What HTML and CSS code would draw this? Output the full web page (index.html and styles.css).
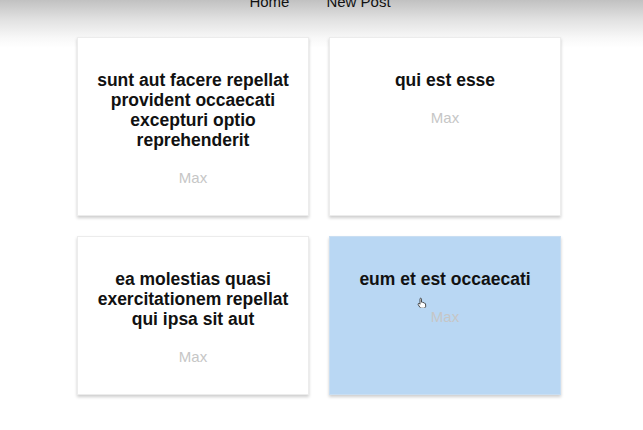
FILE: index.html
```html
<html>
<head>
  <link rel="stylesheet" href="styles.css">
</head>
<body>
  <div class="nav">
    <a class="nav-link" href="#">Home</a>
    <a class="nav-link" href="#">New Post</a>
  </div>
  <div class="posts">
    <div class="post">
      <h2 class="post-title">sunt aut facere repellat provident occaecati excepturi optio reprehenderit</h2>
      <p class="post-author">Max</p>
    </div>
    <div class="post">
      <h2 class="post-title">qui est esse</h2>
      <p class="post-author">Max</p>
    </div>
    <div class="post">
      <h2 class="post-title">ea molestias quasi exercitationem repellat qui ipsa sit aut</h2>
      <p class="post-author">Max</p>
    </div>
    <div class="post post-selected">
      <h2 class="post-title">eum et est occaecati</h2>
      <p class="post-author">Max</p>
      <!-- mouse pointer from the recording -->
      <svg class="pointer" width="10" height="11" viewBox="0 0 10 11">
        <path d="M3.5 1.2c.6 0 1 .4 1 1v3l.4-.1c.5-.1 1 .2 1.1.6l.3-.1c.5-.1 1 .2 1.1.6.5-.1 1 .2 1.1.7l.2 2.2c0 1.2-.9 2.1-2.1 2.1H4.6c-.7 0-1.3-.4-1.7-.9L1.2 7.6c-.3-.4-.2-.9.2-1.1.4-.3.9-.2 1.2.2l.4.5V2.2c0-.6.1-1 .5-1z" fill="#fff" stroke="#222" stroke-width=".8"/>
      </svg>
    </div>
  </div>
</body>
</html>
```

FILE: styles.css
```css
html, body {
  margin: 0;
  padding: 0;
  font-family: "Liberation Sans", Helvetica, Arial, sans-serif;
}
body {
  background: linear-gradient(#c1c1c1 0px, #e2e2e2 20px, #f8f8f8 38px, #fff 48px) no-repeat;
  background-color: #fff;
  min-height: 430px;
}
.nav {
  display: flex;
  justify-content: center;
  gap: 37px;
  margin: -8px 3px 0 0;
  line-height: 20px;
  font-size: 15px;
}
.nav-link {
  color: #111;
  text-decoration: none;
}
.posts {
  display: grid;
  grid-template-columns: 232px 232px;
  column-gap: 20px;
  row-gap: 20px;
  margin: 25px 0 0 77px;
}
.post {
  position: relative;
  background: #fff;
  border: 1px solid #ececec;
  box-shadow: 0 2px 3px rgba(0, 0, 0, 0.2);
  padding: 16px;
  text-align: center;
}
.post-selected {
  background: #b9d7f3;
  border-color: #c9def2;
}
.post-title {
  font-size: 17.5px;
  line-height: 20px;
  font-weight: bold;
  color: #111;
  margin: 16px 0 0;
}
.post-author {
  font-size: 15px;
  line-height: 17px;
  color: #c6c6c6;
  margin: 19px 0 13px;
}
.pointer {
  position: absolute;
  left: 87px;
  top: 60px;
}
```
